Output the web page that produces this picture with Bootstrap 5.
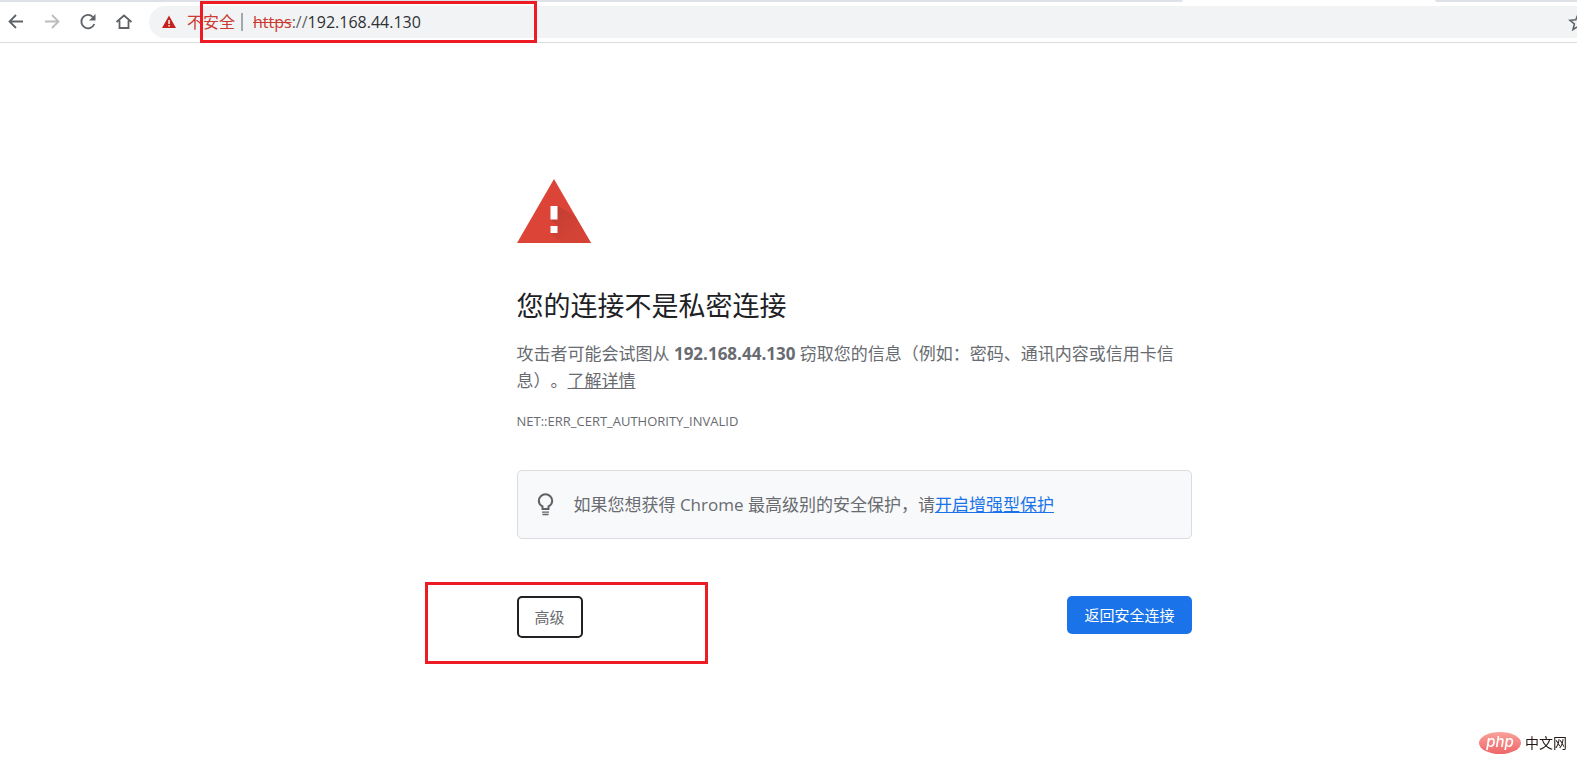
<!DOCTYPE html>
<html lang="zh-CN">
<head>
<meta charset="utf-8">
<meta name="viewport" content="width=device-width, initial-scale=1">
<title>隐私设置错误</title>
<link href="https://cdn.jsdelivr.net/npm/bootstrap@5.3.0/dist/css/bootstrap.min.css" rel="stylesheet">
<style>
  body { font-family: "Open Sans", "Noto Sans CJK SC", sans-serif; font-size: 17px; line-height: 27px; color: #686b70; background: #fff; text-spacing-trim: space-all; }
  .tab-edge { height: 2px; }
  .tab-edge span { background: #dee1e6; }
  .tab-edge .tab-left { width: 75%; border-bottom-right-radius: 2px; }
  .tab-edge .tab-right { width: 9%; border-bottom-left-radius: 2px; }
  .toolbar { height: 41px; padding-left: 6px; border-bottom: 1px solid #dadce0; }
  .tool-btn { width: 20px; height: 20px; line-height: 0; color: #5f6368; }
  .tool-btn:disabled { color: #babcbe; opacity: 1; }
  .omnibox { height: 32px; background: #f1f3f4; border-radius: 16px 0 0 16px; margin-left: 15px; padding-left: 12px; font-size: 16px; color: #303134; }
  .warn-text { color: #cb3a33; }
  .warn-label { margin-left: 10px; }
  .url-sep { width: 2px; height: 18px; background: #a4a8ad; margin: 0 10px 0 6px; }
  .url-rest { color: #5f6368; }
  .star-btn { margin-right: -11px; }
  .page-wrap { overflow-x: clip; padding-bottom: 80px; }
  .outline-mark { position: absolute; border: 3px solid #ed1c24; pointer-events: none; }
  .mark-url { left: 51px; top: -5px; width: 337px; height: 42px; }
  .mark-advanced { left: -92px; top: -14px; width: 283px; height: 82px; }
  .interstitial { max-width: 675px; margin-left: calc(50% - 272px); padding-top: 136px; }
  h1 { font-size: 27px; line-height: 36px; color: #202124; font-weight: 400; margin: 45px 0 16px; }
  .error-code { font-size: 13px; line-height: 20px; margin: 17px 0 39px; }
  .promo { background: #f8f9fa; border: 1px solid #dadce0; border-radius: 5px; padding: 20px 16px; }
  .promo a { color: #1a73e8; }
  .promo svg { margin-right: 17px; }
  .actions { margin-top: 57px; }
  .action-btn { font-size: 15px; line-height: 22px; border-radius: 5px; padding: 8px 17px; }
  .btn-advanced { border: 2px solid #202124; color: #686b70; padding: 8px 16px; }
  .btn-safe, .btn-safe:hover { background: #1a73e8; color: #fff; border: 0; }
  .site-logo { position: fixed; right: 10px; bottom: 20px; font-size: 14px; line-height: 24px; color: #231815; }
</style>
</head>
<body>
<div class="page-wrap">
  <header>
    <div class="tab-edge d-flex justify-content-between"><span class="tab-left"></span><span class="tab-right"></span></div>
    <nav class="toolbar d-flex align-items-center" aria-label="浏览器工具栏">
      <div class="d-flex gap-3">
        <button class="tool-btn btn p-0 border-0" aria-label="后退"><svg width="20" height="20" viewBox="0 0 20 20" fill="none" stroke="currentColor" stroke-width="1.800"><path d="M17 9.500H4M10 3 3.500 9.500 10 16"/></svg></button>
        <button class="tool-btn btn p-0 border-0" aria-label="前进" disabled><svg width="20" height="20" viewBox="0 0 20 20" fill="none" stroke="currentColor" stroke-width="1.800"><path d="M3 9.500h13M10 3l6.500 6.500L10 16"/></svg></button>
        <button class="tool-btn btn p-0 border-0" aria-label="重新加载"><svg width="20" height="20" viewBox="0 0 20 20"><path d="M16.300 12A6.700 6.700 0 1 1 14.700 4.800" fill="none" stroke="currentColor" stroke-width="1.800"/><path d="M17.500 2v6.500H11z" fill="currentColor"/></svg></button>
        <button class="tool-btn btn p-0 border-0" aria-label="主页"><svg width="20" height="20" viewBox="0 0 20 20" fill="none" stroke="currentColor" stroke-width="1.800"><path d="M2.500 10 10 3.500l7.500 6.500M5.500 8.500V16h9V8.500"/></svg></button>
      </div>
      <div class="omnibox position-relative flex-grow-1 d-flex align-items-center">
        <svg width="16" height="16" viewBox="0 0 16 16" aria-hidden="true"><path d="M8 1.500 15 14H1z" fill="#c5221f"/><path d="M7.300 6h1.500v4H7.300zM7.300 11h1.500v1.500H7.300z" fill="#f1f3f4"/></svg>
        <span class="warn-text warn-label">不安全</span>
        <span class="url-sep"></span>
        <div class="flex-grow-1" role="textbox" aria-label="地址栏"><s class="warn-text">https</s><span class="url-rest">://</span>192.168.44.130</div>
        <button class="tool-btn star-btn btn p-0 border-0" aria-label="收藏"><svg width="20" height="20" viewBox="0 0 20 20" fill="none" stroke="currentColor" stroke-width="1.600"><path d="m10 2.500 2.200 5.300 5.800.5-4.400 3.700 1.400 5.500-5-3-5 3 1.400-5.500L2 8.300l5.800-.5z"/></svg></button>
        <span class="outline-mark mark-url"></span>
      </div>
    </nav>
  </header>

  <main class="interstitial">
    <svg class="d-block" width="74" height="64" viewBox="0 0 74 64" aria-hidden="true">
      <defs><linearGradient id="shade" x1="0" y1="0" x2="1" y2="1"><stop offset="0" stop-color="#be3d31"/><stop offset=".6" stop-color="#d34236"/><stop offset="1" stop-color="#d64337"/></linearGradient></defs>
      <path d="M37 0 74 64H0z" fill="#db4437"/>
      <path d="M40.500 27 58 37l16 27H44L33.500 54l7-7-7-6.500z" fill="url(#shade)"/>
      <path d="M33.500 27h7v13.500h-7zM33.500 47h7v7h-7z" fill="#fff"/>
    </svg>
    <h1>您的连接不是私密连接</h1>
    <p class="mb-0">攻击者可能会试图从 <strong>192.168.44.130</strong> 窃取您的信息（例如：密码、通讯内容或信用卡信息）。<a href="#" class="text-reset">了解详情</a></p>
    <div class="error-code">NET::ERR_CERT_AUTHORITY_INVALID</div>
    <div class="promo d-flex align-items-center">
      <svg width="23" height="24" viewBox="0 0 23 24" aria-hidden="true"><path d="M8.500 16v-2.600C6 12 4.800 10.200 4.800 8a6.700 6.700 0 0 1 13.400 0c0 2.200-1.200 4-3.700 5.400V16z" fill="none" stroke="#5f6368" stroke-width="2"/><path d="M8 18.500h7v1.200H8zM8.500 20.700h6v1.600h-6z" fill="#5f6368"/></svg>
      <div>如果您想获得 Chrome 最高级别的安全保护，请<a href="#">开启增强型保护</a></div>
    </div>
    <div class="actions d-flex justify-content-between align-items-start">
      <div class="position-relative">
        <button type="button" class="btn action-btn btn-advanced">高级</button>
        <span class="outline-mark mark-advanced"></span>
      </div>
      <button type="button" class="btn action-btn btn-safe">返回安全连接</button>
    </div>
  </main>
</div>
<a href="#" class="site-logo d-flex align-items-center text-decoration-none" aria-label="php中文网">
  <svg class="me-1" width="42" height="22" viewBox="0 0 42 22">
    <defs><linearGradient id="pink" x1="0" y1="0" x2="0" y2="1"><stop offset="0" stop-color="#f9a19a"/><stop offset="1" stop-color="#f0666a"/></linearGradient></defs>
    <ellipse cx="21" cy="11" rx="21" ry="11" fill="url(#pink)"/>
    <text x="21" y="15" text-anchor="middle" font-family="Inter, sans-serif" font-style="italic" font-weight="500" font-size="15" fill="#fff">php</text>
  </svg>
  <span>中文网</span>
</a>
<script src="https://cdn.jsdelivr.net/npm/bootstrap@5.3.0/dist/js/bootstrap.bundle.min.js"></script>
</body>
</html>
